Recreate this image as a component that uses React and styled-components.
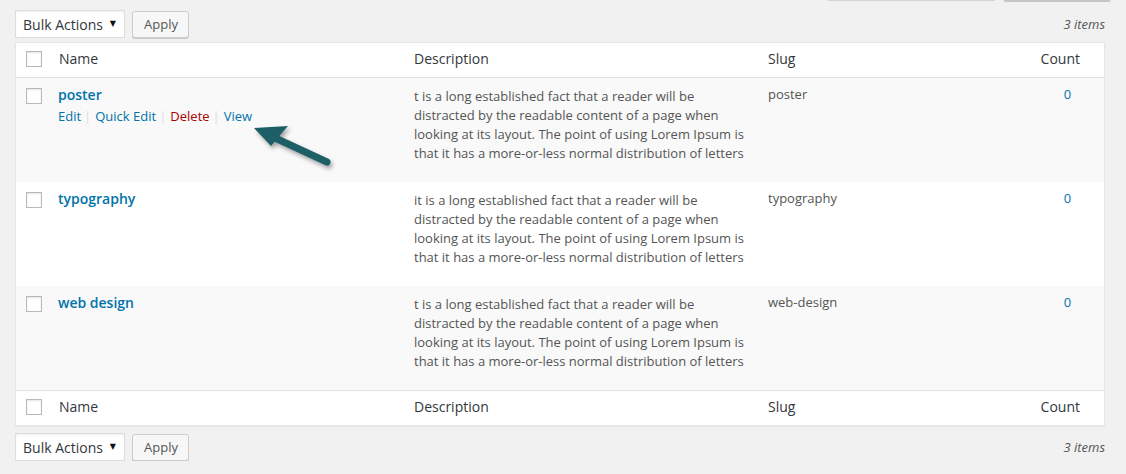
import React from 'react'
import styled, {createGlobalStyle} from 'styled-components'

const GlobalStyle = createGlobalStyle`
    body {
        margin: 0;
        background: #f1f1f1;
        font-family: "Open Sans", "Liberation Sans", sans-serif;
        color: #444;
    }
`

const terms = [
    {name: 'poster', slug: 'poster', count: 0, desc: 't is a long established fact that a reader will be distracted by the readable content of a page when looking at its layout. The point of using Lorem Ipsum is that it has a more-or-less normal distribution of letters'},
    {name: 'typography', slug: 'typography', count: 0, desc: 'it is a long established fact that a reader will be distracted by the readable content of a page when looking at its layout. The point of using Lorem Ipsum is that it has a more-or-less normal distribution of letters'},
    {name: 'web design', slug: 'web-design', count: 0, desc: 't is a long established fact that a reader will be distracted by the readable content of a page when looking at its layout. The point of using Lorem Ipsum is that it has a more-or-less normal distribution of letters'},
]

const TableNav = ({top}) => (
    <Nav top={top}>
        <Select>
            <span>Bulk Actions</span>
            <Caret>▼</Caret>
        </Select>
        <Button>Apply</Button>
        <Count>3 items</Count>
    </Nav>
)

const HeadRow = ({footer}) => (
    <Row head footer={footer}>
        <CbCell><Checkbox /></CbCell>
        <HeadCell>Name</HeadCell>
        <HeadCell>Description</HeadCell>
        <HeadCell>Slug</HeadCell>
        <HeadCell right>Count</HeadCell>
    </Row>
)

const App = () => {
    return (
        <Page>
            <GlobalStyle />
            <SearchRow>
                <SearchInput />
                <SearchButton />
            </SearchRow>
            <TableNav top />
            <Table>
                <HeadRow />
                {terms.map((t, i) => (
                    <Row key={t.name} alt={i % 2 === 0}>
                        <CbCell body><Checkbox /></CbCell>
                        <Cell>
                            <TermName>{t.name}</TermName>
                            {i === 0 && (
                                <Actions>
                                    <ActionLink>Edit</ActionLink>
                                    <Sep>|</Sep>
                                    <ActionLink>Quick Edit</ActionLink>
                                    <Sep>|</Sep>
                                    <ActionLink danger>Delete</ActionLink>
                                    <Sep>|</Sep>
                                    <ActionLink>View</ActionLink>
                                </Actions>
                            )}
                        </Cell>
                        <Cell><Desc>{t.desc}</Desc></Cell>
                        <Cell><SlugText>{t.slug}</SlugText></Cell>
                        <Cell center><CountLink>{t.count}</CountLink></Cell>
                        {i === 0 && (
                            <Arrow width="90" height="60" viewBox="0 0 90 60">
                                <path d="M24 20 L78 45" stroke="#1c5f66" strokeWidth="7" strokeLinecap="round" />
                                <path d="M5 11 L39 9 L32 17 L28 22 L22 29 Z" fill="#1c5f66" />
                            </Arrow>
                        )}
                    </Row>
                ))}
                <HeadRow footer />
            </Table>
            <TableNav />
        </Page>
    )
}

const Page = styled.div`
    padding: 0 15px;
    width: 1096px;
`

const SearchRow = styled.div`
    display: flex;
    justify-content: flex-end;
    gap: 8px;
    height: 2px;
    overflow: hidden;
`

const SearchInput = styled.div`
    width: 167px;
    height: 28px;
    margin-top: -27px;
    background: #fff;
    border: 1px solid #d4d4d4;
    box-sizing: border-box;
`

const SearchButton = styled.div`
    width: 108px;
    height: 28px;
    margin-top: -26px;
    background: #f7f7f7;
    border: 1px solid #ccc;
    border-bottom: 2px solid #c4c4c4;
    box-sizing: border-box;
    border-radius: 3px;
`

const Nav = styled.div`
    display: flex;
    align-items: center;
    width: 1090px;
    height: 28px;
    margin: ${props => props.top ? '8px 0 4px' : '7px 0 0'};
`

const Select = styled.div`
    width: 110px;
    height: 28px;
    box-sizing: border-box;
    border: 1px solid #ddd;
    background: #fff;
    box-shadow: inset 0 1px 2px rgba(0,0,0,.07);
    display: flex;
    align-items: center;
    justify-content: space-between;
    padding: 0 8px 0 7px;
    font-size: 14px;
    color: #32373c;
`

const Caret = styled.span`
    font-size: 8px;
    color: #111;
    font-family: "DejaVu Sans", sans-serif;
    margin-top: -2px;
`

const Button = styled.div`
    margin-left: 7px;
    height: 27px;
    box-sizing: border-box;
    padding: 0 10px 0 11px;
    display: flex;
    align-items: center;
    background: #f7f7f7;
    border: 1px solid #ccc;
    border-radius: 3px;
    box-shadow: 0 1px 0 #ccc;
    font-size: 13px;
    color: #555;
`

const Count = styled.div`
    margin-left: auto;
    font-size: 13px;
    font-style: italic;
    color: #555;
`

const Table = styled.div`
    width: 1090px;
    box-sizing: border-box;
    border: 1px solid #e5e5e5;
    box-shadow: 0 1px 1px rgba(0,0,0,.04);
    background: #fff;
`

const Row = styled.div`
    position: relative;
    display: grid;
    grid-template-columns: 33px 355px 354px 1fr 74px;
    background: ${props => props.alt ? '#f9f9f9' : '#fff'};
    height: ${props => props.head ? '34px' : '104px'};
    border-bottom: ${props => props.head && !props.footer ? '1px solid #e1e1e1' : 'none'};
    border-top: ${props => props.footer ? '1px solid #e1e1e1' : 'none'};
`

const CbCell = styled.div`
    padding: ${props => props.body ? '10px 0 0 10px' : '8px 0 0 10px'};
`

const Checkbox = styled.div`
    width: 16px;
    height: 16px;
    box-sizing: border-box;
    border: 1px solid #b4b9be;
    background: #fff;
    box-shadow: inset 0 1px 2px rgba(0,0,0,.1);
`

const HeadCell = styled.div`
    font-size: 14px;
    color: #32373c;
    padding: 6px ${props => props.right ? '24px' : '10px'} 0 10px;
    text-align: ${props => props.right ? 'right' : 'left'};
`

const Cell = styled.div`
    padding: 6px 10px 0 9px;
    text-align: ${props => props.center ? 'center' : 'left'};
`

const TermName = styled.div`
    font-size: 14px;
    font-weight: 600;
    color: #0073aa;
    line-height: 22px;
`

const Actions = styled.div`
    font-size: 13px;
    line-height: 20px;
`

const ActionLink = styled.span`
    color: ${props => props.danger ? '#a00' : '#0073aa'};
`

const Sep = styled.span`
    color: #ddd;
    margin: 0 4px 0 3px;
`

const Desc = styled.div`
    font-size: 13px;
    line-height: 19px;
    color: #555;
    margin-top: 3px;
    padding-left: 1px;
`

const SlugText = styled.div`
    font-size: 13px;
    line-height: 20px;
    color: #555;
    padding-left: 1px;
`

const CountLink = styled.div`
    font-size: 13px;
    line-height: 20px;
    color: #0073aa;
    padding-left: 2px;
`

const Arrow = styled.svg`
    position: absolute;
    left: 233px;
    top: 39px;
    overflow: visible;
    filter: drop-shadow(2px 3px 2px rgba(0,0,0,.35));
`

export default App
